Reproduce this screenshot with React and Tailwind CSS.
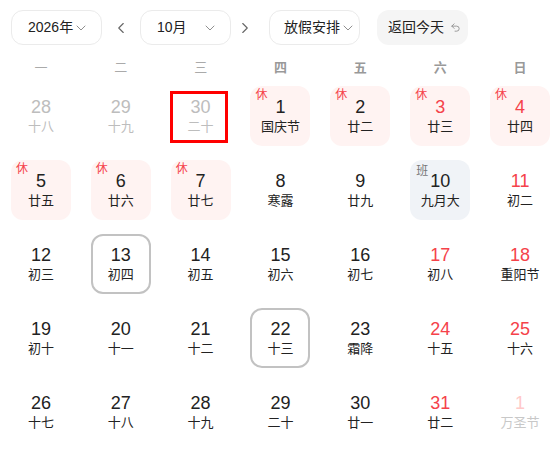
import { ChevronDown, ChevronLeft, ChevronRight, Undo2 } from 'lucide-react';

const WEEK = ['一', '二', '三', '四', '五', '六', '日'];

// kind: dim = other month, rest = 休, work = 班
const ROWS = [
  [
    { d: 28, l: '十八', kind: 'dim' },
    { d: 29, l: '十九', kind: 'dim' },
    { d: 30, l: '二十', kind: 'dim', marked: true },
    { d: 1, l: '国庆节', kind: 'rest' },
    { d: 2, l: '廿二', kind: 'rest' },
    { d: 3, l: '廿三', kind: 'rest', red: true },
    { d: 4, l: '廿四', kind: 'rest', red: true },
  ],
  [
    { d: 5, l: '廿五', kind: 'rest' },
    { d: 6, l: '廿六', kind: 'rest' },
    { d: 7, l: '廿七', kind: 'rest' },
    { d: 8, l: '寒露' },
    { d: 9, l: '廿九' },
    { d: 10, l: '九月大', kind: 'work' },
    { d: 11, l: '初二', red: true },
  ],
  [
    { d: 12, l: '初三' },
    { d: 13, l: '初四', ring: true },
    { d: 14, l: '初五' },
    { d: 15, l: '初六' },
    { d: 16, l: '初七' },
    { d: 17, l: '初八', red: true },
    { d: 18, l: '重阳节', red: true },
  ],
  [
    { d: 19, l: '初十' },
    { d: 20, l: '十一' },
    { d: 21, l: '十二' },
    { d: 22, l: '十三', ring: true },
    { d: 23, l: '霜降' },
    { d: 24, l: '十五', red: true },
    { d: 25, l: '十六', red: true },
  ],
  [
    { d: 26, l: '十七' },
    { d: 27, l: '十八' },
    { d: 28, l: '十九' },
    { d: 29, l: '二十' },
    { d: 30, l: '廿一' },
    { d: 31, l: '廿二', red: true },
    { d: 1, l: '万圣节', kind: 'next' },
  ],
];

function Select({ label, className = '' }) {
  return (
    <div className={`shrink-0 flex items-center justify-between h-[35px] w-[91px] rounded-xl border border-[#ebebeb] bg-white ${className}`}>
      <span className="text-[14px] text-[#222] whitespace-nowrap">{label}</span>
      <ChevronDown size={16} strokeWidth={1.4} className="shrink-0 text-[#888]" />
    </div>
  );
}

function Day({ day }) {
  const { d, l, kind, red, ring, marked } = day;
  let bg = '';
  if (kind === 'rest') bg = 'bg-[#fff3f2]';
  if (kind === 'work') bg = 'bg-[#f0f3f7]';

  let numColor = 'text-[#222]';
  let lunarColor = 'text-[#222]';
  if (kind === 'dim') {
    numColor = 'text-[#bdbdbd]';
    lunarColor = 'text-[#bdbdbd]';
  } else if (kind === 'next') {
    numColor = 'text-[#ffc9c9]';
    lunarColor = 'text-[#c8c8c8]';
  } else if (red) {
    numColor = 'text-[#f5424a]';
  }

  return (
    <div className="flex justify-center">
      <div
        className={`relative flex flex-col items-center justify-center w-[60px] h-[60px] rounded-xl ${bg} ${
          ring ? 'border-2 border-[#c2c2c2] rounded-[10px]' : ''
        }`}
      >
        {kind === 'rest' && (
          <span className="absolute left-[5px] top-[3px] text-[12px] leading-none text-[#f5424a]">休</span>
        )}
        {kind === 'work' && (
          <span className="absolute left-[6px] top-[5px] text-[12px] leading-none text-[#777]">班</span>
        )}
        <span className={`text-[18px] leading-[21px] ${numColor}`}>{d}</span>
        <span className={`text-[13px] leading-[18px] ${lunarColor}`}>{l}</span>
        {marked && (
          <div className="absolute left-[-1px] top-[5px] w-[58px] h-[52px] border-[3px] border-[#ff0000]" />
        )}
      </div>
    </div>
  );
}

export default function App() {
  return (
    <div
      className="w-[560px] h-[449px] bg-white overflow-hidden"
      style={{ fontFamily: '"Liberation Sans", "Noto Sans CJK SC", sans-serif' }}
    >
      <div className="flex items-center pt-[10px] pl-[11px]">
        <Select label="2026年" className="pl-4 pr-[12px]" />
        <ChevronLeft size={18} strokeWidth={1.5} className="shrink-0 text-[#666] mx-[10px]" />
        <Select label="10月" className="pl-4 pr-[12px]" />
        <ChevronRight size={18} strokeWidth={1.5} className="shrink-0 text-[#666] mx-[5px]" />
        <Select label="放假安排" className="ml-[10px] pl-[14px] pr-[7px]" />
        <div className="shrink-0 ml-[17px] flex items-center gap-[6px] h-[35px] w-[91px] rounded-xl bg-[#f5f5f5] pl-[11px]">
          <span className="text-[14px] text-[#222] whitespace-nowrap">返回今天</span>
          <Undo2 size={11} strokeWidth={1.8} className="shrink-0 text-[#888]" />
        </div>
      </div>

      <div className="grid grid-cols-7 ml-px mt-[13px] h-[20px] items-center">
        {WEEK.map((w, i) => (
          <div
            key={w}
            className={`text-center text-[13px] ${i < 3 ? 'text-[#aaa]' : 'text-[#999] font-semibold'}`}
          >
            {w}
          </div>
        ))}
      </div>

      <div className="flex flex-col gap-[14px] mt-[8px] ml-px">
        {ROWS.map((row, r) => (
          <div key={r} className="grid grid-cols-7">
            {row.map((day, i) => (
              <Day key={i} day={day} />
            ))}
          </div>
        ))}
      </div>
    </div>
  );
}
